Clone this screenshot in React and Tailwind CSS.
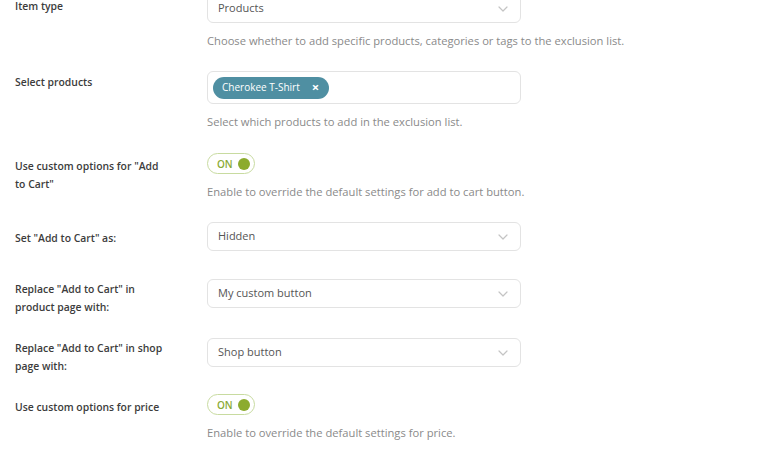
import { useState } from "react";

const font = { fontFamily: '"Open Sans", "Noto Sans", sans-serif' };

const Chevron = () => (
  <svg width="10" height="6" viewBox="0 0 10 6" className="text-[#c4c4c4]">
    <path d="M1 1l4 4 4-4" fill="none" stroke="currentColor" strokeWidth="1.2" strokeLinecap="round" strokeLinejoin="round" />
  </svg>
);

const Select = ({ value }) => (
  <div className="flex items-center justify-between h-[29px] w-[314px] px-[10px] border border-[#e3e3e3] rounded-[6px] bg-white text-[11px] text-[#555555]">
    <span>{value}</span>
    <span className="mr-[2px]">
      <Chevron />
    </span>
  </div>
);

const Toggle = ({ on, onClick }) => (
  <button
    onClick={onClick}
    className="flex items-center justify-between h-[21px] w-[48px] pl-[9px] pr-[4px] border border-[#c8dba0] rounded-full bg-white"
  >
    <span className="text-[10px] font-semibold text-[#8aaa36] leading-none">{on ? "ON" : "OFF"}</span>
    <span className="w-[12px] h-[12px] rounded-full bg-[#8cab2e]" />
  </button>
);

const Desc = ({ children }) => (
  <p className="mt-[9px] text-[11.2px] leading-[18px] text-[#8a8a8a]">{children}</p>
);

const Row = ({ label, children, className = "" }) => (
  <div className={`flex ${className}`}>
    <div className="w-[207px] shrink-0 pl-[15px] pr-[20px]">
      <div className="w-[150px] text-[10.4px] font-semibold leading-[18px] text-[#3c3c3c]">{label}</div>
    </div>
    <div className="flex-1">{children}</div>
  </div>
);

export default function App() {
  const [cartOn, setCartOn] = useState(true);
  const [priceOn, setPriceOn] = useState(true);

  return (
    <div style={font} className="w-[769px] h-[452px] overflow-hidden bg-white">
      <div className="-mt-[6px]">
        <Row label={<div className="pt-[3px]">Item type</div>}>
          <Select value="Products" />
          <Desc>Choose whether to add specific products, categories or tags to the exclusion list.</Desc>
        </Row>

        <Row className="mt-[21px]" label={<div className="pt-[2px]">Select products</div>}>
          <div className="flex items-center h-[33px] w-[314px] px-[5px] border border-[#e3e3e3] rounded-[6px] bg-white">
            <span className="flex items-center gap-[12px] h-[22px] pl-[9px] pr-[10px] rounded-full bg-[#4f8fa2] text-[10px] text-white">
              Cherokee T-Shirt
              <span className="text-[13px] font-bold leading-none">×</span>
            </span>
          </div>
          <Desc>Select which products to add in the exclusion list.</Desc>
        </Row>

        <Row className="mt-[22px]" label={<div className="pt-[4px]">Use custom options for "Add to Cart"</div>}>
          <Toggle on={cartOn} onClick={() => setCartOn(!cartOn)} />
          <Desc>Enable to override the default settings for add to cart button.</Desc>
        </Row>

        <Row className="mt-[21px]" label={<div className="pt-[7px]">Set "Add to Cart" as:</div>}>
          <Select value="Hidden" />
        </Row>

        <Row className="mt-[28px]" label={<div className="pt-[1px]">Replace "Add to Cart" in product page with:</div>}>
          <Select value="My custom button" />
        </Row>

        <Row className="mt-[22px]" label={<div className="pt-[1px]">Replace "Add to Cart" in shop page with:</div>}>
          <Select value="Shop button" />
        </Row>

        <Row className="mt-[19px]" label={<div className="pt-[4px]">Use custom options for price</div>}>
          <Toggle on={priceOn} onClick={() => setPriceOn(!priceOn)} />
          <Desc>Enable to override the default settings for price.</Desc>
        </Row>
      </div>
    </div>
  );
}
